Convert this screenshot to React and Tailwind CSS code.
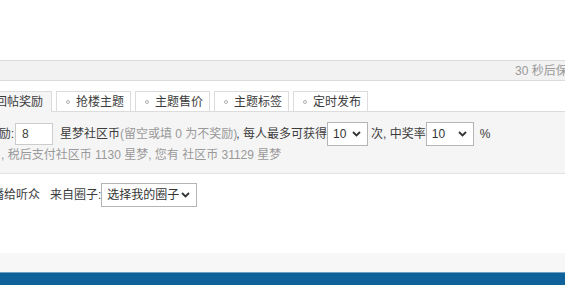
import React from "react";

const FONT = { fontFamily: '"Liberation Sans", "Noto Sans CJK SC", sans-serif' };

function Chevron() {
  return (
    <svg width="9" height="6" viewBox="0 0 9 6" aria-hidden>
      <path d="M1 1l3.5 3.5L8 1" fill="none" stroke="#333" strokeWidth="1.8" />
    </svg>
  );
}

function FakeSelect({ value, width }) {
  return (
    <div
      className={`flex h-[24px] shrink-0 items-center justify-between border border-[#b5b5b5] bg-white pl-[5px] pr-[6px] text-[#333] ${width}`}
    >
      <span className="leading-none">{value}</span>
      <Chevron />
    </div>
  );
}

const tabs = ["抢楼主题", "主题售价", "主题标签", "定时发布"];

export default function App() {
  return (
    <div
      className="relative h-[285px] w-[565px] overflow-hidden bg-white text-[12px] text-[#3c3c3c]"
      style={FONT}
    >
      <div className="h-[60px]" />

      {/* autosave bar */}
      <div className="flex h-[21px] items-center whitespace-nowrap border-y border-[#dcdcdc] bg-[#f2f2f2] pl-[515px] text-[#999]">
        30 秒后保存
      </div>

      <div className="h-[10px]" />

      {/* tabs */}
      <div className="flex h-[21px] items-start gap-[4px] border-b border-[#dcdcdc]">
        <div className="-mb-px flex h-[21px] w-[52px] shrink-0 items-center justify-end whitespace-nowrap border-r border-t border-[#dcdcdc] bg-[#f5f5f5] pr-[8px]">
          回帖奖励
        </div>
        {tabs.map((label) => (
          <div
            key={label}
            className="flex h-[20px] w-[75px] shrink-0 items-center whitespace-nowrap border-x border-t border-[#dcdcdc] bg-white pl-[9px]"
          >
            <span className="mr-[6px] h-[4px] w-[4px] rounded-full border border-[#b0b0b0]" />
            <span>{label}</span>
          </div>
        ))}
      </div>

      {/* reward panel */}
      <div className="border-b border-[#e3e3e3] bg-[#f5f5f5] pb-[9px] pt-[10px]">
        <div className="flex h-[24px] items-center whitespace-nowrap">
          <div className="flex w-[14px] shrink-0 justify-end">回帖奖励:</div>
          <div className="ml-[1px] flex h-[22px] w-[38px] shrink-0 items-center border border-[#ccc] bg-white pl-[6px]">
            8
          </div>
          <span className="ml-[7px]">星梦社区币</span>
          <span className="text-[#999]">(留空或填 0 为不奖励)</span>
          <span className="-ml-[1px]">, 每人最多可获得</span>
          <FakeSelect value="10" width="w-[41px]" />
          <span className="ml-[3px]">次, 中奖率</span>
          <FakeSelect value="10" width="w-[48px]" />
          <span className="ml-[6px]">%</span>
        </div>
        <div className="flex h-[18px] items-center whitespace-nowrap text-[#999]">
          <span className="pl-[1px]">, 税后支付社区币 1130 星梦, 您有 社区币 31129 星梦</span>
        </div>
      </div>

      {/* circle row */}
      <div className="mt-[9px] flex h-[24px] items-center whitespace-nowrap">
        <div className="flex w-[40px] shrink-0 justify-end">同时广播给听众</div>
        <span className="ml-[10px]">来自圈子:</span>
        <FakeSelect value="选择我的圈子" width="w-[96px]" />
      </div>

      <div className="h-[46px]" />

      <div className="h-[19px] bg-[#f7f7f7]" />
      <div className="h-[13px] border-t border-[#6f9dc4] bg-[#0e6199]" />
    </div>
  );
}
